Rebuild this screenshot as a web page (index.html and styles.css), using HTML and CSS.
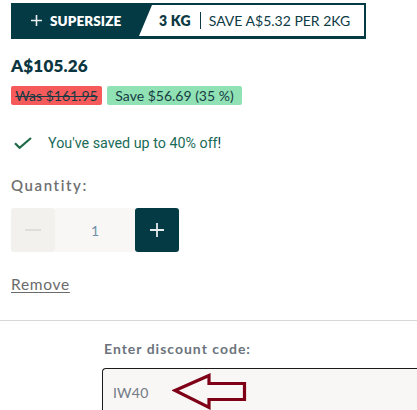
FILE: index.html
```html
<!DOCTYPE html>
<html>
<head>
<meta charset="utf-8">
<link rel="stylesheet" href="styles.css">
</head>
<body>
<div class="product">
  <div class="bundle">
    <div class="bundle-left">
      <svg class="plus-icon" width="11" height="11" viewBox="0 0 11 11"><path d="M5.5 0v11M0 5.5h11" stroke="#e9eef0" stroke-width="1.6"/></svg>
      <span>SUPERSIZE</span>
    </div>
    <div class="bundle-right">
      <span class="kg">3 KG</span>
      <span class="sep"></span>
      <span class="save">SAVE A$5.32 PER 2KG</span>
    </div>
  </div>

  <div class="price">A$105.26</div>

  <div class="badges">
    <span class="badge was">Was $161.95</span>
    <span class="badge saving">Save $56.69 (35 %)</span>
  </div>

  <div class="saved">
    <svg class="check" width="18" height="12" viewBox="0 0 18 12"><path d="M1 6.2l4.6 4.6L17 1" fill="none" stroke="#1f6b47" stroke-width="2.2"/></svg>
    <span>You've saved up to 40% off<b>!</b></span>
  </div>

  <div class="qty-label">Quantity:</div>
  <div class="qty">
    <button class="qty-btn minus"><svg width="16" height="2" viewBox="0 0 16 2"><path d="M0 1h16" stroke="#dcd9d6" stroke-width="1.6"/></svg></button>
    <div class="qty-val">1</div>
    <button class="qty-btn plus"><svg width="14" height="14" viewBox="0 0 14 14"><path d="M7 0v14M0 7h14" stroke="#e6ecee" stroke-width="1.8"/></svg></button>
  </div>

  <a class="remove" href="#">Remove</a>
</div>

<div class="divider"></div>

<div class="discount">
  <div class="disc-label">Enter discount code:</div>
  <div class="disc-input">
    <span class="code">IW40</span>
    <svg class="arrow" width="76" height="38" viewBox="0 0 76 38"><path d="M3 17.5L37 2.5V10.5H72.5V26.5H37V34.5Z" fill="none" stroke="#7f0016" stroke-width="3.2" stroke-linejoin="miter"/></svg>
  </div>
</div>
</body>
</html>
```

FILE: styles.css
```css
* { box-sizing: border-box; }
body {
  margin: 0;
  background: #fff;
  font-family: Lato, "Open Sans", sans-serif;
  color: #0d3a44;
}
.product { padding-left: 11px; }

.bundle {
  margin-top: 3px;
  display: inline-flex;
  background: #033a44;
  padding: 2px 2px 3px 0;
  height: 36px;
}
.bundle-left {
  width: 128px;
  display: flex;
  align-items: center;
  color: #fff;
  font-weight: 800;
  font-size: 13.5px;
  letter-spacing: 0.1px;
  padding-left: 20px;
  gap: 8px;
}
.bundle-right {
  width: 225px;
  background: #fff;
  clip-path: polygon(13px 0, 100% 0, 100% 100%, 0 100%);
  display: flex;
  align-items: center;
  padding-left: 20px;
  font-size: 14px;
  color: #0d3a44;
}
.kg { font-weight: 800; letter-spacing: 0.2px; }
.sep { width: 1px; height: 17px; background: #0d3a44; margin: 0 8px 0 9px; }
.save { letter-spacing: 0; }

.price {
  margin-top: 16px;
  font-size: 17px;
  font-weight: 800;
  line-height: 22px;
  color: #0c3640;
  letter-spacing: 0.2px;
}
.badges {
  margin-top: 9px;
  display: flex;
  gap: 5px;
}
.badge {
  height: 19px;
  line-height: 19px;
  font-size: 14px;
  border-radius: 2px;
  color: #173a44;
  white-space: nowrap;
  text-align: center;
}
.was { background: #f65a5a; text-decoration: line-through; width: 91px; }
.saving { background: #90e2b4; width: 135px; }

.saved {
  margin-top: 28px;
  display: flex;
  align-items: center;
  height: 20px;
  font-family: Roboto, sans-serif;
  font-size: 14.3px;
  color: #1a6b58;
}
.check { margin-left: 3px; margin-right: 16px; }
.saved b { font-weight: 400; color: #0d3a44; }

.qty-label {
  margin-top: 23px;
  font-size: 15px;
  font-weight: 600;
  color: #6f6f6f;
  letter-spacing: 1.6px;
  line-height: 18px;
}
.qty {
  margin-top: 14px;
  display: flex;
  height: 44px;
  width: 168px;
}
.qty-btn {
  width: 44px;
  height: 44px;
  border: none;
  border-radius: 3px;
  padding: 0;
  display: flex;
  align-items: center;
  justify-content: center;
}
.minus { background: #f3f1ee; }
.plus { background: #033a44; }
.qty-val {
  width: 80px;
  background: #f8f7f5;
  display: flex;
  align-items: center;
  justify-content: center;
  font-size: 14px;
  color: #6f8fa8;
}
.remove {
  display: inline-block;
  margin-top: 23px;
  font-size: 15.5px;
  color: #6b6b6b;
  letter-spacing: 0.7px;
  text-decoration: underline;
  text-underline-offset: 2px;
}
.divider {
  margin-top: 27px;
  height: 1px;
  background: #d8d8d8;
}
.discount { padding-left: 102px; }
.disc-label {
  margin-top: 20px;
  padding-left: 2px;
  font-size: 14px;
  font-weight: 700;
  color: #6c737c;
  letter-spacing: 1px;
  line-height: 16px;
}
.disc-input {
  margin-top: 11px;
  height: 50px;
  border: 1px solid #1b1b1b;
  border-right: none;
  border-bottom: none;
  border-radius: 4px 0 0 0;
  background: #f8f7f5;
  display: flex;
  align-items: flex-start;
  padding: 4px 0 0 10px;
}
.code {
  margin-top: 11px;
  font-size: 14px;
  color: #727a85;
  letter-spacing: 0.2px;
}
.arrow { margin-left: 24px; }
```
